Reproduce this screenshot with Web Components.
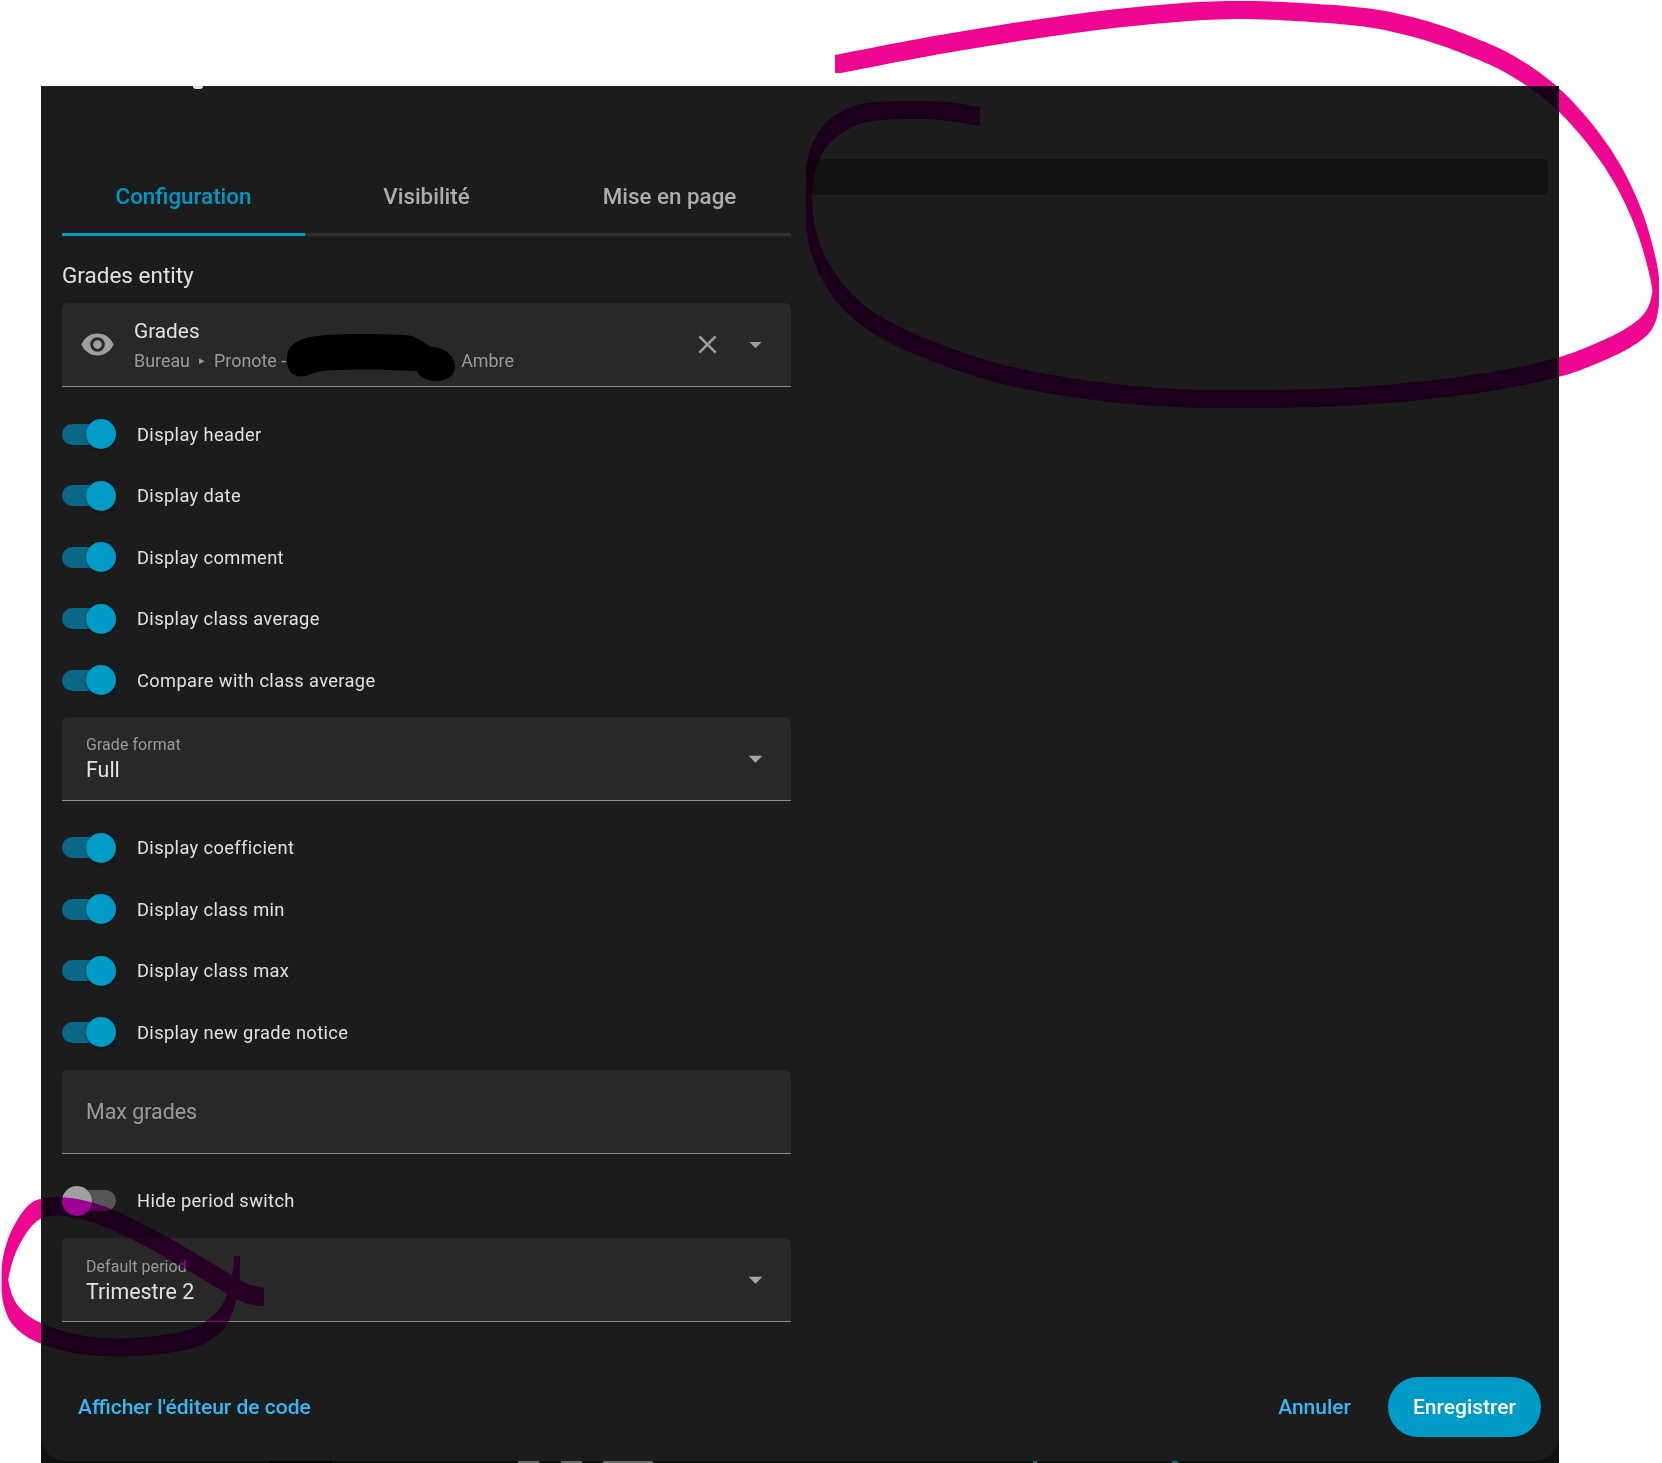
<!DOCTYPE html>
<html lang="fr">
<head>
<meta charset="utf-8">
<title>Card editor</title>
<style>
html, body { margin: 0; padding: 0; background: #fff; }
body { width: 1662px; height: 1463px; overflow: hidden; font-family: Roboto, "Liberation Sans", sans-serif; }
</style>
</head>
<body>
<card-dialog>
    <editor-tabs slot="tabs" active="0">
        <span>Configuration</span>
        <span>Visibilité</span>
        <span>Mise en page</span>
    </editor-tabs>

    <div slot="form-heading">Grades entity</div>
    <entity-picker slot="form"></entity-picker>

    <toggle-row slot="form" checked class="first">Display header</toggle-row>
    <toggle-row slot="form" checked>Display date</toggle-row>
    <toggle-row slot="form" checked>Display comment</toggle-row>
    <toggle-row slot="form" checked>Display class average</toggle-row>
    <toggle-row slot="form" checked>Compare with class average</toggle-row>

    <form-field slot="form" label="Grade format" value="Full" dropdown style="margin-top: 5.5px"></form-field>

    <toggle-row slot="form" checked class="first">Display coefficient</toggle-row>
    <toggle-row slot="form" checked>Display class min</toggle-row>
    <toggle-row slot="form" checked>Display class max</toggle-row>
    <toggle-row slot="form" checked>Display new grade notice</toggle-row>

    <form-field slot="form" placeholder="Max grades"></form-field>

    <toggle-row slot="form" class="first">Hide period switch</toggle-row>

    <form-field slot="form" label="Default period" value="Trimestre 2" dropdown></form-field>

    <preview-bar slot="preview"></preview-bar>

    <text-button slot="footer-start">Afficher l'éditeur de code</text-button>
    <text-button slot="footer-end">Annuler</text-button>
    <text-button slot="footer-end" filled>Enregistrer</text-button>
</card-dialog>

<!-- pen marks drawn on top of the screenshot -->
<pen-stroke points="838,64 943,44 1050,27 1140,16 1230,10 1314,13 1376,19 1427,31 1472,47 1511,65 1550,92 1585,128 1615,170 1637,215 1651,260 1656,293 1649,320 1628,338 1595,354 1559,367 1500,380 1427,390 1342,397 1258,399 1174,398 1089,390 1005,375 937,353 882,328 848,302 826,272 813,240 809,207 811,167 822,140 839,124 864,113 904,110 943,111 977,116"></pen-stroke>
<pen-stroke points="237,1265 235,1283 227,1310 213,1327 187,1340 133,1347 83,1345 40,1333 17,1317 7,1297 5,1273 13,1243 28,1218 43,1208 67,1207 100,1215 140,1233 180,1255 217,1277 243,1292 261,1297"></pen-stroke>

<script>
// < ======================================================
// < Shared Helper
// < ======================================================

/**
 * Attach an open shadow root holding the given css and html
 * @param {HTMLElement} host - Element to attach to
 * @param {string} css - Styles for the shadow root
 * @param {string} html - Markup for the shadow root
 */
function render(host, css, html) {
    host.attachShadow({ mode: 'open' });
    host.shadowRoot.innerHTML = `<style>${css}</style>${html}`;
}

const ARROW_SVG = /*html*/`<svg class="arrow" viewBox="0 0 24 24" width="29" height="29"><path fill="currentColor" d="M7,10L12,15L17,10H7Z"/></svg>`;

// < ======================================================
// < Dialog Frame
// < ======================================================

class CardDialog extends HTMLElement {
    constructor() {
        super();
        render(this, /*css*/`
            :host {
                display: block;
                width: 1518px;
                height: 1377px;
                margin: 86px 0 0 41px;
                background: #101010;
                color: #e1e1e1;
            }
            .surface {
                height: 1375px;
                box-sizing: border-box;
                background: #1c1c1c;
                border-radius: 0 0 24px 24px;
                display: flex;
                flex-direction: column;
                position: relative;
            }
            .title-tail {
                position: absolute;
                left: 152px;
                top: 0;
                width: 10px;
                height: 3px;
                border-radius: 0 0 5px 5px;
                background: #e6e6e6;
            }
            .content {
                display: grid;
                grid-template-columns: 729px 742px;
                column-gap: 15px;
                padding: 78px 11px 0 21px;
            }
            .form { display: flex; flex-direction: column; }
            .heading {
                font-size: 22.5px;
                line-height: 24px;
                margin: 27px 0 16px;
            }
            .footer {
                margin-top: auto;
                height: 60px;
                padding: 0 18px 24px 21px;
                display: flex;
                align-items: center;
                justify-content: space-between;
            }
            .end { display: flex; align-items: center; gap: 21px; }
            /* the page behind the dialog peeks out under its bottom edge */
            .peek {
                height: 2px;
                background: linear-gradient(to right,
                    #101010 228px, #000 228px, #000 291px, #101010 291px,
                    #101010 477px, #666 477px, #666 498px, #101010 498px,
                    #101010 520px, #666 520px, #666 541px, #101010 541px,
                    #101010 562px, #666 562px, #666 612px, #101010 612px,
                    #101010 992px, #0a6a88 992px, #0a6a88 996px, #101010 996px,
                    #101010 1131px, #0a6a88 1131px, #0a6a88 1137px, #101010 1137px);
            }
        `, /*html*/`
            <div class="surface">
                <div class="title-tail"></div>
                <div class="content">
                    <div class="form">
                        <slot name="tabs"></slot>
                        <div class="heading"><slot name="form-heading"></slot></div>
                        <slot name="form"></slot>
                    </div>
                    <div><slot name="preview"></slot></div>
                </div>
                <div class="footer">
                    <div><slot name="footer-start"></slot></div>
                    <div class="end"><slot name="footer-end"></slot></div>
                </div>
            </div>
            <div class="peek"></div>
        `);
    }
}

// < ======================================================
// < Tabs
// < ======================================================

class EditorTabs extends HTMLElement {
    constructor() {
        super();
        render(this, /*css*/`
            :host {
                display: flex;
                height: 72px;
                box-sizing: border-box;
                border-bottom: 3px solid #313131;
            }
            .tab {
                flex: 1;
                display: flex;
                align-items: center;
                justify-content: center;
                margin-bottom: -3px;
                padding-bottom: 9px;
                box-sizing: border-box;
                font-size: 22.4px;
                font-weight: 500;
                color: #adadad;
            }
            .tab.active { color: #009ac7; border-bottom: 3px solid #009ac7; padding-bottom: 6px; }
        `, '');
    }

    connectedCallback() {
        const active = Number(this.getAttribute('active') || 0);
        [...this.children].forEach((child, index) => {
            const tab = document.createElement('div');
            tab.className = index === active ? 'tab active' : 'tab';
            tab.textContent = child.textContent;
            this.shadowRoot.appendChild(tab);
        });
    }
}

// < ======================================================
// < Entity Picker
// < ======================================================

class EntityPicker extends HTMLElement {
    constructor() {
        super();
        render(this, /*css*/`
            :host {
                display: flex;
                align-items: center;
                height: 84px;
                box-sizing: border-box;
                padding: 0 21px 0 18px;
                background: #282828;
                border-bottom: 1px solid #8c8c8c;
                border-radius: 6px 6px 0 0;
                color: #9f9f9f;
            }
            .eye { flex: none; margin-right: 19px; }
            .text { flex: 1; min-width: 0; padding-top: 2px; }
            .name { font-size: 20.8px; line-height: 24px; color: #e1e1e1; margin-bottom: 7px; }
            .path {
                display: flex;
                align-items: center;
                font-size: 17.9px;
                line-height: 22px;
                color: #9b9b9b;
            }
            .sep { font-size: 11px; margin: 0 9px; }
            .hidden-part { position: relative; width: 175px; flex: none; align-self: stretch; }
            .hidden-part svg { position: absolute; left: 1px; top: -16px; }
            .close { flex: none; margin-right: 18px; }
        `, /*html*/`
            <svg class="eye" viewBox="0 0 24 24" width="35" height="35"><path fill="currentColor" d="M12,9A3,3 0 0,0 9,12A3,3 0 0,0 12,15A3,3 0 0,0 15,12A3,3 0 0,0 12,9M12,17A5,5 0 0,1 7,12A5,5 0 0,1 12,7A5,5 0 0,1 17,12A5,5 0 0,1 12,17M12,4.5C7,4.5 2.73,7.61 1,12C2.73,16.39 7,19.5 12,19.5C17,19.5 21.27,16.39 23,12C21.27,7.61 17,4.5 12,4.5Z"/></svg>
            <div class="text">
                <div class="name">Grades</div>
                <div class="path">
                    <span>Bureau</span><span class="sep">▸</span><span>Pronote -</span>
                    <span class="hidden-part">
                        <svg width="170" height="48" viewBox="0 0 170 48"><path fill="#000" d="M0,26 C0,12 8,5 30,2 C55,-1 95,0 118,1 C130,2 136,8 144,13 C158,13 168,22 168,33 C168,42 158,47 150,47 C138,47 132,42 130,37 C100,36 60,35 35,37 C24,39 18,44 10,42 C3,40 0,34 0,26 Z"/></svg>
                    </span>
                    <span>Ambre</span>
                </div>
            </div>
            <svg class="close" viewBox="0 0 24 24" width="31" height="31"><path fill="currentColor" d="M19,6.41L17.59,5L12,10.59L6.41,5L5,6.41L10.59,12L5,17.59L6.41,19L12,13.41L17.59,19L19,17.59L13.41,12L19,6.41Z"/></svg>
            ${ARROW_SVG}
        `);
    }
}

// < ======================================================
// < Toggle Row
// < ======================================================

class ToggleRow extends HTMLElement {
    constructor() {
        super();
        render(this, /*css*/`
            :host {
                display: flex;
                align-items: center;
                height: 61.5px;
                font-size: 18.3px;
                letter-spacing: 0.37px;
                color: #e1e1e1;
            }
            :host(.first) { margin-top: 16.5px; }
            .switch {
                flex: none;
                position: relative;
                width: 54px;
                height: 21px;
                margin-right: 21px;
                border-radius: 11px;
                background: #555555;
            }
            .thumb {
                position: absolute;
                top: -4.5px;
                left: 0;
                width: 30px;
                height: 30px;
                border-radius: 50%;
                background: #a0a0a0;
                box-shadow: 0 1px 3px rgba(0, 0, 0, 0.4);
            }
            :host([checked]) .switch { background: #0a6787; }
            :host([checked]) .thumb { left: 24px; background: #009ac7; }
        `, /*html*/`
            <div class="switch"><div class="thumb"></div></div>
            <slot></slot>
        `);
    }
}

// < ======================================================
// < Form Field
// < ======================================================

class FormField extends HTMLElement {
    constructor() {
        super();
        render(this, /*css*/`
            :host {
                display: flex;
                align-items: center;
                height: 84px;
                margin-top: 6.5px;
                box-sizing: border-box;
                padding: 0 19px 0 24px;
                background: #282828;
                border-bottom: 1px solid #8c8c8c;
                border-radius: 6px 6px 0 0;
            }
            .text { flex: 1; padding-top: 3px; }
            .label { font-size: 15.9px; line-height: 18px; color: #9b9b9b; letter-spacing: 0.1px; margin-bottom: 3px; }
            .value { font-size: 21.4px; line-height: 26px; color: #e1e1e1; }
            .text.empty { padding-top: 0; }
            .placeholder { font-size: 21.4px; color: #9b9b9b; }
            .arrow { color: #a6a6a6; width: 33px; height: 33px; }
        `, '');
    }

    connectedCallback() {
        const label = this.getAttribute('label');
        const value = this.getAttribute('value');
        const placeholder = this.getAttribute('placeholder');
        let inner = `<div class="text"><div class="label">${label}</div><div class="value">${value}</div></div>`;
        if (placeholder) inner = `<div class="text empty"><div class="placeholder">${placeholder}</div></div>`;
        const arrow = this.hasAttribute('dropdown') ? ARROW_SVG : '';
        this.shadowRoot.innerHTML += inner + arrow;
    }
}

// < ======================================================
// < Preview Bar
// < ======================================================

class PreviewBar extends HTMLElement {
    constructor() {
        super();
        render(this, /*css*/`
            :host {
                display: block;
                height: 36px;
                margin-top: -5px;
                background: #121212;
                border-radius: 6px;
            }
        `, '');
    }
}

// < ======================================================
// < Text Button
// < ======================================================

class TextButton extends HTMLElement {
    constructor() {
        super();
        render(this, /*css*/`
            :host {
                display: inline-flex;
                align-items: center;
                height: 60px;
                padding: 0 16px;
                font-size: 21px;
                font-weight: 500;
                color: #35b9f6;
                white-space: nowrap;
            }
            :host([filled]) {
                padding: 0 25px;
                background: #009ac7;
                color: #ffffff;
                border-radius: 30px;
            }
        `, '<slot></slot>');
    }
}

// < ======================================================
// < Pen Stroke Annotation
// < ======================================================

const NIB_W = 6;
const NIB_H = 18;

/**
 * Catmull-Rom subdivision so the hand drawn line stays smooth
 * @param {number[][]} pts - Control points
 * @returns {number[][]} Denser list of points
 */
function smooth(pts) {
    const out = [];
    for (let i = 0; i < pts.length - 1; i++) {
        const p0 = pts[Math.max(i - 1, 0)];
        const p1 = pts[i];
        const p2 = pts[i + 1];
        const p3 = pts[Math.min(i + 2, pts.length - 1)];
        for (let s = 0; s < 12; s++) {
            const t = s / 12;
            const at = k => 0.5 * (2 * p1[k] + (p2[k] - p0[k]) * t
                + (2 * p0[k] - 5 * p1[k] + 4 * p2[k] - p3[k]) * t * t
                + (3 * p1[k] - p0[k] - 3 * p2[k] + p3[k]) * t * t * t);
            out.push([at(0), at(1)]);
        }
    }
    out.push(pts[pts.length - 1]);
    return out;
}

/**
 * Outline of a rectangular nib moved from a to b, always wound the same way
 * @param {number[]} a - Start point
 * @param {number[]} b - End point
 * @returns {string} Path data
 */
function nibSweep(a, b) {
    const [l, r] = a[0] <= b[0] ? [a, b] : [b, a];
    const w = NIB_W / 2;
    const h = NIB_H / 2;
    let poly;
    if (l[1] <= r[1]) {
        poly = [[l[0] - w, l[1] - h], [l[0] + w, l[1] - h], [r[0] + w, r[1] - h],
                [r[0] + w, r[1] + h], [r[0] - w, r[1] + h], [l[0] - w, l[1] + h]];
    } else {
        poly = [[l[0] - w, l[1] - h], [r[0] - w, r[1] - h], [r[0] + w, r[1] - h],
                [r[0] + w, r[1] + h], [l[0] + w, l[1] + h], [l[0] - w, l[1] + h]];
    }
    return 'M' + poly.map(p => `${p[0].toFixed(1)},${p[1].toFixed(1)}`).join('L') + 'Z';
}

class PenStroke extends HTMLElement {
    constructor() {
        super();
        render(this, /*css*/`
            :host {
                position: absolute;
                left: 0;
                top: 0;
                width: 1662px;
                height: 1463px;
                pointer-events: none;
                mix-blend-mode: multiply;
            }
            svg { display: block; }
        `, '');
    }

    connectedCallback() {
        const pts = this.getAttribute('points').trim().split(/\s+/).map(pair => pair.split(',').map(Number));
        const dense = smooth(pts);
        let d = '';
        for (let i = 0; i < dense.length - 1; i++) d += nibSweep(dense[i], dense[i + 1]);
        // the ink reads more purple over the dark dialog than over the white page
        this.shadowRoot.innerHTML += /*html*/`
            <svg width="1662" height="1463" viewBox="0 0 1662 1463">
                <defs>
                    <clipPath id="on-dialog"><rect x="41" y="86" width="1518" height="1377"/></clipPath>
                    <clipPath id="on-page"><path clip-rule="evenodd" d="M0,0H1662V1463H0ZM41,86V1463H1559V86Z"/></clipPath>
                </defs>
                <path fill="#ee0590" clip-path="url(#on-page)" d="${d}"/>
                <path fill="#ff00f0" clip-path="url(#on-dialog)" d="${d}"/>
            </svg>`;
    }
}

// * ======================================================
// * Custom Element Registration
// * ======================================================

customElements.define('card-dialog', CardDialog);
customElements.define('editor-tabs', EditorTabs);
customElements.define('entity-picker', EntityPicker);
customElements.define('toggle-row', ToggleRow);
customElements.define('form-field', FormField);
customElements.define('preview-bar', PreviewBar);
customElements.define('text-button', TextButton);
customElements.define('pen-stroke', PenStroke);
</script>
</body>
</html>
